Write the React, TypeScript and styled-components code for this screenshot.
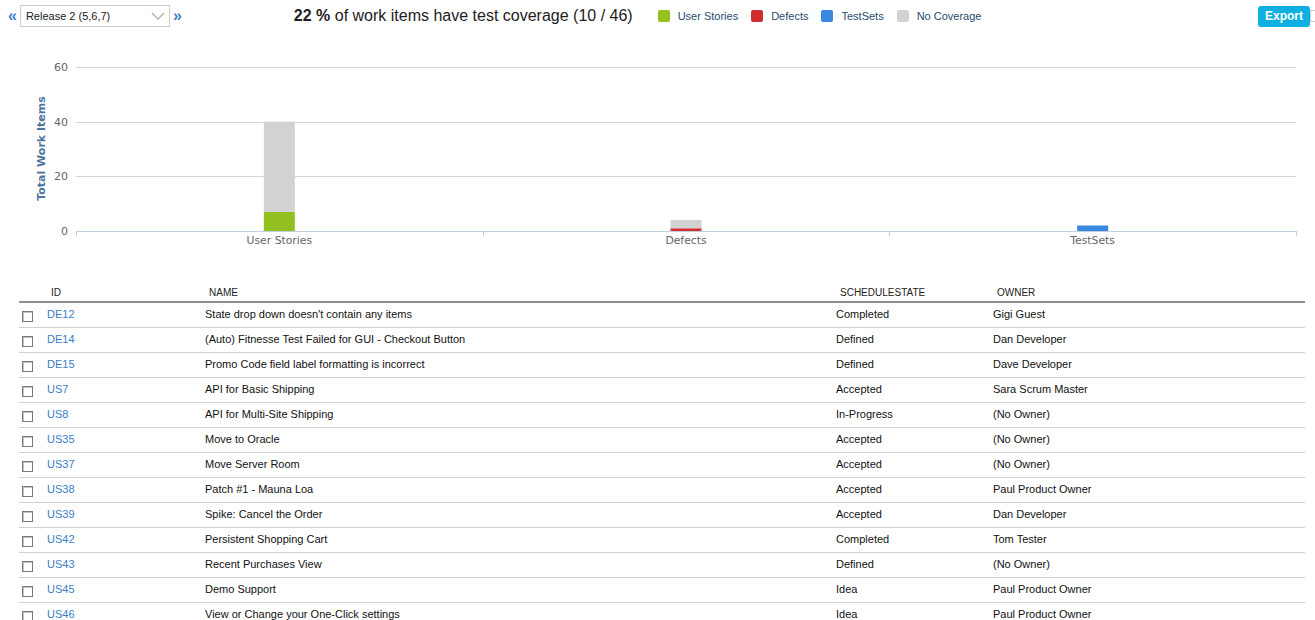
import React from 'react';
import styled, { createGlobalStyle } from 'styled-components';

const GlobalStyle = createGlobalStyle`
  html, body {
    margin: 0;
    padding: 0;
    background: #ffffff;
    overflow: hidden;
  }
  body {
    font-family: "Liberation Sans", Arial, Helvetica, sans-serif;
    color: #222222;
  }
`;

type Row = { id: string; name: string; state: string; owner: string };

const rows: Row[] = [
  { id: 'DE12', name: "State drop down doesn't contain any items", state: 'Completed', owner: 'Gigi Guest' },
  { id: 'DE14', name: '(Auto) Fitnesse Test Failed for GUI - Checkout Button', state: 'Defined', owner: 'Dan Developer' },
  { id: 'DE15', name: 'Promo Code field label formatting is incorrect', state: 'Defined', owner: 'Dave Developer' },
  { id: 'US7', name: 'API for Basic Shipping', state: 'Accepted', owner: 'Sara Scrum Master' },
  { id: 'US8', name: 'API for Multi-Site Shipping', state: 'In-Progress', owner: '(No Owner)' },
  { id: 'US35', name: 'Move to Oracle', state: 'Accepted', owner: '(No Owner)' },
  { id: 'US37', name: 'Move Server Room', state: 'Accepted', owner: '(No Owner)' },
  { id: 'US38', name: 'Patch #1 - Mauna Loa', state: 'Accepted', owner: 'Paul Product Owner' },
  { id: 'US39', name: 'Spike: Cancel the Order', state: 'Accepted', owner: 'Dan Developer' },
  { id: 'US42', name: 'Persistent Shopping Cart', state: 'Completed', owner: 'Tom Tester' },
  { id: 'US43', name: 'Recent Purchases View', state: 'Defined', owner: '(No Owner)' },
  { id: 'US45', name: 'Demo Support', state: 'Idea', owner: 'Paul Product Owner' },
  { id: 'US46', name: 'View or Change your One-Click settings', state: 'Idea', owner: 'Paul Product Owner' },
];

const legend = [
  { label: 'User Stories', color: '#92c020' },
  { label: 'Defects', color: '#d22e2e' },
  { label: 'TestSets', color: '#3a88e0' },
  { label: 'No Coverage', color: '#d2d2d2' },
];

// chart geometry, in page coordinates
const plotLeft = 76;
const plotRight = 1296;
const zeroY = 231;
const unit = 164 / 60;
const catWidth = (plotRight - plotLeft) / 3;

const series = [
  { name: 'User Stories', parts: [{ v: 7, c: '#92c020' }, { v: 33, c: '#d2d2d2' }] },
  { name: 'Defects', parts: [{ v: 1, c: '#d22e2e' }, { v: 3, c: '#d2d2d2' }] },
  { name: 'TestSets', parts: [{ v: 2, c: '#3a88e0' }] },
];

function Chevron() {
  return (
    <svg width="14" height="8" viewBox="0 0 14 8">
      <path d="M1 1 L7 7 L13 1" fill="none" stroke="#b8b8b8" strokeWidth="1.5" />
    </svg>
  );
}

function CoverageChart() {
  const font = '"DejaVu Sans", "Open Sans", Verdana, sans-serif';
  return (
    <ChartSvg width="1315" height="249" viewBox="0 34 1315 249">
      {[60, 40, 20].map((v) => {
        const y = Math.round(zeroY - v * unit) + 0.5;
        return <line key={v} x1={plotLeft} x2={plotRight} y1={y} y2={y} stroke="#d4d4d4" strokeWidth="1" />;
      })}
      {[60, 40, 20, 0].map((v) => (
        <text key={v} x={68} y={zeroY - v * unit + 4} textAnchor="end" fontSize="11" fill="#666666" fontFamily={font}>
          {v}
        </text>
      ))}
      <line x1={plotLeft} x2={plotRight} y1={zeroY + 0.5} y2={zeroY + 0.5} stroke="#c0d0e0" strokeWidth="1" />
      {[0, 1, 2, 3].map((i) => {
        const x = Math.round(plotLeft + i * catWidth) + 0.5;
        return <line key={i} x1={x} x2={x} y1={zeroY} y2={zeroY + 5} stroke="#c0d0e0" strokeWidth="1" />;
      })}
      <text
        x={0}
        y={0}
        transform="translate(45 148.5) rotate(-90)"
        textAnchor="middle"
        fontSize="11"
        fontWeight="bold"
        fill="#4d759e"
        fontFamily={font}
      >
        Total Work Items
      </text>
      {series.map((s, i) => {
        const cx = plotLeft + catWidth * (i + 0.5);
        let base = zeroY;
        return (
          <g key={s.name}>
            {s.parts.map((p, j) => {
              const h = p.v * unit;
              base -= h;
              return <rect key={j} x={cx - 15.5} y={base} width={31} height={h} fill={p.c} />;
            })}
            <text x={cx} y={244} textAnchor="middle" fontSize="10.8" fill="#666666" fontFamily={font}>
              {s.name}
            </text>
          </g>
        );
      })}
    </ChartSvg>
  );
}

function App() {
  return (
    <Page>
      <GlobalStyle />
      <TopBar>
        <Pager>
          <Arrow>«</Arrow>
          <ReleaseSelect>
            <span>Release 2 (5,6,7)</span>
            <Chevron />
          </ReleaseSelect>
          <Arrow>»</Arrow>
        </Pager>
        <Summary>
          <b>22 %</b> of work items have test coverage (10 / 46)
        </Summary>
        <Legend>
          {legend.map((l) => (
            <LegendItem key={l.label}>
              <Swatch $color={l.color} />
              {l.label}
            </LegendItem>
          ))}
        </Legend>
        <ExportButton>Export</ExportButton>
        <EdgeBox />
      </TopBar>

      <CoverageChart />

      <Grid>
        <HeaderRow>
          <span />
          <HeadCell>ID</HeadCell>
          <HeadCell>NAME</HeadCell>
          <HeadCell>SCHEDULESTATE</HeadCell>
          <HeadCell>OWNER</HeadCell>
        </HeaderRow>
        {rows.map((r) => (
          <DataRow key={r.id}>
            <Check />
            <IdLink>{r.id}</IdLink>
            <Cell>{r.name}</Cell>
            <Cell>{r.state}</Cell>
            <Cell>{r.owner}</Cell>
          </DataRow>
        ))}
      </Grid>
    </Page>
  );
}

const Page = styled.main`
  width: 1315px;
  height: 620px;
  overflow: hidden;
`;

const TopBar = styled.header`
  display: flex;
  align-items: center;
  height: 34px;
  padding: 0 0 3px 8px;
  box-sizing: border-box;
`;

const Pager = styled.div`
  display: flex;
  align-items: center;
  gap: 3px;
`;

const Arrow = styled.span`
  color: #3a82c4;
  font-size: 16px;
  font-weight: bold;
  line-height: 1;
  padding-top: 1px;
`;

const ReleaseSelect = styled.div`
  display: flex;
  align-items: center;
  justify-content: space-between;
  width: 150px;
  height: 22px;
  box-sizing: border-box;
  border: 1px solid #cccccc;
  padding: 0 4px 0 5px;
  font-size: 11px;
  color: #222;
  background: #fff;
`;

const Summary = styled.div`
  margin-left: 112px;
  font-size: 16px;
  color: #222;
  & b {
    font-weight: bold;
  }
`;

const Legend = styled.div`
  display: flex;
  align-items: center;
  gap: 13px;
  margin-left: 25px;
`;

const LegendItem = styled.div`
  display: flex;
  align-items: center;
  gap: 8px;
  font-family: "Liberation Sans", Arial, sans-serif;
  font-size: 11px;
  color: #274b6d;
`;

const Swatch = styled.span<{ $color: string }>`
  display: inline-block;
  width: 12px;
  height: 12px;
  border-radius: 2px;
  background: ${(p) => p.$color};
`;

const ExportButton = styled.button`
  margin-left: auto;
  margin-top: 1px;
  width: 52px;
  height: 21px;
  border: none;
  border-radius: 3px;
  background: #0fb0e0;
  color: #ffffff;
  font-family: "Liberation Sans", Arial, sans-serif;
  font-size: 12px;
  font-weight: bold;
  padding: 0;
`;

const EdgeBox = styled.span`
  width: 5px;
  height: 12px;
  border: 1px solid #c8c8c8;
  border-right: none;
  box-sizing: border-box;
`;

const ChartSvg = styled.svg`
  display: block;
`;

const Grid = styled.section`
  margin-left: 19px;
  width: 1286px;
`;

const columns = '24px 158px 631px 157px 1fr';

const HeaderRow = styled.div`
  display: grid;
  grid-template-columns: ${columns};
  align-items: center;
  height: 20px;
  box-sizing: border-box;
  border-bottom: 2px solid #8f8f8f;
`;

const HeadCell = styled.span`
  padding-left: 8px;
  font-size: 10px;
  color: #222;
`;

const DataRow = styled.div`
  display: grid;
  grid-template-columns: ${columns};
  align-items: center;
  height: 25px;
  box-sizing: border-box;
  border-bottom: 1px solid #d0d0d0;
  padding-bottom: 2px;
`;

const Check = styled.span`
  width: 11px;
  height: 11px;
  margin-left: 3px;
  margin-top: 4px;
  box-sizing: border-box;
  border: 1px solid #7a7a7a;
  box-shadow: inset 1px 1px 0 #c4c4c4;
  background: #fff;
`;

const Cell = styled.span`
  padding-left: 4px;
  font-size: 11px;
  color: #111;
  white-space: nowrap;
`;

const IdLink = styled(Cell)`
  color: #3b7cc4;
`;

export default App;
